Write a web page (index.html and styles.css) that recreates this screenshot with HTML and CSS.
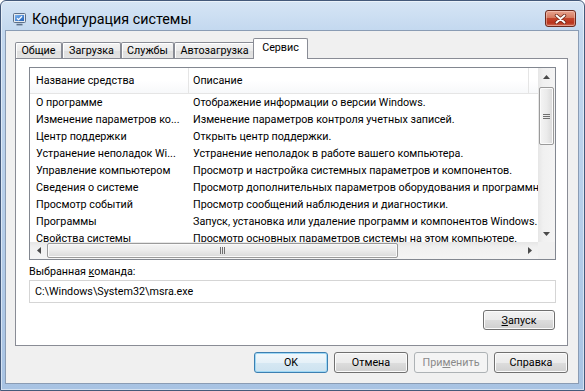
FILE: index.html
```html
<!DOCTYPE html>
<html lang="ru">
<head>
    <meta charset="UTF-8">
    <title>Конфигурация системы</title>
    <link rel="stylesheet" href="styles.css">
</head>
<body>
    <div class="window">
        <div class="titlebar">
            <svg class="app-icon" width="15" height="14" viewBox="0 0 15 14">
                <defs>
                    <linearGradient id="scr" x1="0" y1="0" x2="1" y2="1">
                        <stop offset="0" stop-color="#7fb6f0"/>
                        <stop offset="1" stop-color="#1f5fb8"/>
                    </linearGradient>
                </defs>
                <rect x="1.5" y="1.5" width="12" height="9" rx="1" fill="#e4e9ef" stroke="#5d7089"/>
                <rect x="3" y="3" width="9" height="6" fill="url(#scr)"/>
                <path d="M5 6.2 L6.6 7.7 L10 4.2" fill="none" stroke="#fff" stroke-width="1.3"/>
                <path d="M4.5 12.6 H10.5" stroke="#5d7089" stroke-width="1.6"/>
            </svg>
            <span class="title">Конфигурация системы</span>
            <div class="close-btn">
                <svg width="13" height="10" viewBox="0 0 13 10">
                    <path d="M2.5 1.5 L10.5 8.5 M10.5 1.5 L2.5 8.5" stroke="#6b2416" stroke-width="3.4" stroke-linecap="round"/>
                    <path d="M2.5 1.5 L10.5 8.5 M10.5 1.5 L2.5 8.5" stroke="#fff" stroke-width="1.9" stroke-linecap="round"/>
                </svg>
            </div>
        </div>

        <div class="client">
            <div class="tabs">
                <div class="tab tab-general">Общие</div>
                <div class="tab tab-boot">Загрузка</div>
                <div class="tab tab-services">Службы</div>
                <div class="tab tab-startup">Автозагрузка</div>
                <div class="tab tab-tools active">Сервис</div>
            </div>

            <div class="panel">
                <div class="listview">
                    <div class="list-main">
                        <div class="list-content">
                            <div class="list-header">
                                <div class="hcol hcol-name">Название средства</div>
                                <div class="hcol hcol-desc">Описание</div>
                            </div>
                            <div class="row"><div class="c1">О программе</div><div class="c2">Отображение информации о версии Windows.</div></div>
                            <div class="row"><div class="c1">Изменение параметров ко...</div><div class="c2">Изменение параметров контроля учетных записей.</div></div>
                            <div class="row"><div class="c1">Центр поддержки</div><div class="c2">Открыть центр поддержки.</div></div>
                            <div class="row"><div class="c1">Устранение неполадок Wi...</div><div class="c2">Устранение неполадок в работе вашего компьютера.</div></div>
                            <div class="row"><div class="c1">Управление компьютером</div><div class="c2">Просмотр и настройка системных параметров и компонентов.</div></div>
                            <div class="row"><div class="c1">Сведения о системе</div><div class="c2">Просмотр дополнительных параметров оборудования и программного обеспечения.</div></div>
                            <div class="row"><div class="c1">Просмотр событий</div><div class="c2">Просмотр сообщений наблюдения и диагностики.</div></div>
                            <div class="row"><div class="c1">Программы</div><div class="c2">Запуск, установка или удаление программ и компонентов Windows.</div></div>
                            <div class="row"><div class="c1">Свойства системы</div><div class="c2">Просмотр основных параметров системы на этом компьютере.</div></div>
                        </div>
                        <div class="vscroll">
                            <div class="sb-btn">
                                <svg width="7" height="4" viewBox="0 0 7 4"><path d="M0 4 L3.5 0 L7 4 Z" fill="#4a4a4a"/></svg>
                            </div>
                            <div class="v-track">
                                <div class="v-thumb"><span class="grip-h"></span></div>
                            </div>
                            <div class="sb-btn">
                                <svg width="7" height="4" viewBox="0 0 7 4"><path d="M0 0 L3.5 4 L7 0 Z" fill="#4a4a4a"/></svg>
                            </div>
                        </div>
                    </div>
                    <div class="hscroll-row">
                        <div class="hscroll">
                            <div class="sb-btn">
                                <svg width="4" height="7" viewBox="0 0 4 7"><path d="M4 0 L0 3.5 L4 7 Z" fill="#4a4a4a"/></svg>
                            </div>
                            <div class="h-track">
                                <div class="h-thumb"><span class="grip-v"></span></div>
                            </div>
                            <div class="sb-btn">
                                <svg width="4" height="7" viewBox="0 0 4 7"><path d="M0 0 L4 3.5 L0 7 Z" fill="#4a4a4a"/></svg>
                            </div>
                        </div>
                        <div class="sb-corner"></div>
                    </div>
                </div>

                <div class="cmd-label">Выбранная <u>к</u>оманда:</div>
                <div class="cmd-field">C:\Windows\System32\msra.exe</div>
                <div class="launch-row">
                    <button class="btn btn-launch"><u>З</u>апуск</button>
                </div>
            </div>

            <div class="footer">
                <button class="btn default">OK</button>
                <button class="btn">Отмена</button>
                <button class="btn" disabled>При<u>м</u>енить</button>
                <button class="btn">Справка</button>
            </div>
        </div>
    </div>
</body>
</html>
```

FILE: styles.css
```css
* {
    box-sizing: border-box;
}
body {
    margin: 0;
    background: #fff;
    font-family: Roboto, "Noto Sans", sans-serif;
    font-size: 10.75px;
    color: #000;
}
.window {
    width: 585px;
    height: 391px;
    display: flex;
    flex-direction: column;
    border: 1px solid #44597a;
    border-radius: 6px 6px 0 0;
    background: linear-gradient(180deg, #d6e5f5 0, #c3d8ef 30px, #b5cde9 60%, #a8c3e3 100%);
    box-shadow: inset 0 0 0 1px rgba(255, 255, 255, 0.5);
}

/* title bar */
.titlebar {
    height: 29px;
    flex: none;
    display: flex;
    align-items: center;
    padding: 6px 8px 0 11px;
}
.app-icon {
    flex: none;
    margin-right: 5px;
}
.title {
    flex: 1;
    font-size: 14.3px;
    color: #000;
}
.close-btn {
    width: 31px;
    height: 17px;
    display: flex;
    align-items: center;
    justify-content: center;
    border: 1px solid #6b2a1e;
    border-radius: 3px;
    background: linear-gradient(180deg, #e9a48f 0, #d47a60 45%, #c3442b 50%, #b8341d 80%, #d2715a 100%);
    box-shadow: inset 0 0 0 1px rgba(255, 220, 210, 0.45);
}

/* client area */
.client {
    flex: 1;
    margin: 0 5px 6px 4px;
    border: 1px solid #8a9cb4;
    background: #f0f0f0;
    padding: 7px 10px 0 9px;
    display: flex;
    flex-direction: column;
}
.tabs {
    height: 20px;
    flex: none;
    display: flex;
    align-items: flex-end;
    position: relative;
    z-index: 1;
}
.tab {
    height: 16px;
    line-height: 15px;
    text-align: center;
    border: 1px solid #898c95;
    border-bottom: none;
    border-radius: 2px 2px 0 0;
    background: linear-gradient(180deg, #f4f4f4 0, #ebebeb 50%, #dedede 51%, #e3e3e3 100%);
    box-shadow: inset 1px 1px 0 #fff;
}
.tab-general { width: 47px; }
.tab-boot { width: 59px; }
.tab-services { width: 53px; }
.tab-startup { width: 81px; }
.tab.active {
    width: 55px;
    height: 21px;
    margin-left: -2px;
    margin-bottom: -1px;
    line-height: 18px;
    background: #fff;
    box-shadow: none;
}
.panel {
    flex: 1;
    border: 1px solid #898c95;
    background: #fff;
    padding: 8px 11px 0 13px;
    display: flex;
    flex-direction: column;
}

/* list view */
.listview {
    height: 193px;
    flex: none;
    border: 1px solid #828790;
    display: flex;
    flex-direction: column;
}
.list-main {
    height: 174px;
    display: flex;
}
.list-content {
    flex: 1;
    overflow: hidden;
    white-space: nowrap;
}
.list-header {
    height: 26px;
    display: flex;
    border-bottom: 1px solid #e5e5e5;
    background: linear-gradient(180deg, #fff 0, #fff 50%, #f7f8fa 100%);
}
.hcol {
    line-height: 25px;
    flex: none;
}
.hcol-name {
    width: 159px;
    padding-left: 6px;
    border-right: 1px solid #e5e5e5;
}
.hcol-desc {
    padding-left: 4px;
    width: 340px;
    border-right: 1px solid #e5e5e5;
}
.row {
    height: 17px;
    line-height: 18px;
    display: flex;
}
.c1 {
    width: 158px;
    flex: none;
    padding-left: 6px;
    overflow: hidden;
}
.c2 {
    flex: none;
    padding-left: 5px;
}

/* scroll bars */
.vscroll {
    width: 17px;
    flex: none;
    display: flex;
    flex-direction: column;
    background: linear-gradient(90deg, #e6e6e6 0, #f0f0f0 30%, #f4f4f4 100%);
}
.sb-btn {
    width: 17px;
    height: 17px;
    flex: none;
    display: flex;
    align-items: center;
    justify-content: center;
}
.v-track {
    flex: 1;
    padding: 2px 1px 0 1px;
}
.v-thumb {
    height: 58px;
    border: 1px solid #9a9a9a;
    border-radius: 2px;
    background: linear-gradient(90deg, #f4f4f4 0, #ebebeb 50%, #d9d9d9 100%);
    box-shadow: inset 0 0 0 1px #fafafa;
    display: flex;
    align-items: center;
    justify-content: center;
}
.grip-h {
    width: 7px;
    height: 5px;
    border-top: 1px solid #6f6f6f;
    border-bottom: 1px solid #6f6f6f;
    background: linear-gradient(180deg, transparent 1px, #6f6f6f 1px, #6f6f6f 2px, transparent 2px);
}
.hscroll-row {
    height: 17px;
    display: flex;
}
.hscroll {
    flex: 1;
    display: flex;
    background: linear-gradient(180deg, #e6e6e6 0, #f0f0f0 30%, #f4f4f4 100%);
}
.h-track {
    flex: 1;
    padding: 1px 0;
}
.h-thumb {
    width: 351px;
    height: 100%;
    border: 1px solid #9a9a9a;
    border-radius: 2px;
    background: linear-gradient(180deg, #f4f4f4 0, #ebebeb 50%, #d9d9d9 100%);
    box-shadow: inset 0 0 0 1px #fafafa;
    display: flex;
    align-items: center;
    justify-content: center;
}
.grip-v {
    width: 5px;
    height: 7px;
    border-left: 1px solid #6f6f6f;
    border-right: 1px solid #6f6f6f;
    background: linear-gradient(90deg, transparent 1px, #6f6f6f 1px, #6f6f6f 2px, transparent 2px);
}
.sb-corner {
    width: 17px;
    flex: none;
    background: #f0f0f0;
}

/* command */
.cmd-label {
    margin-top: 4px;
    line-height: 15px;
}
.cmd-field {
    margin-top: 1px;
    height: 23px;
    line-height: 21px;
    border: 1px solid #d5d5d5;
    padding-left: 5px;
    background: #fff;
}
.launch-row {
    display: flex;
    justify-content: flex-end;
    margin-top: 7px;
    padding-right: 1px;
}

/* buttons */
.btn {
    width: 74px;
    height: 21px;
    padding: 0;
    font-family: inherit;
    font-size: 10.75px;
    color: #000;
    border: 1px solid #707070;
    border-radius: 3px;
    background: linear-gradient(180deg, #f2f2f2 0, #ebebeb 50%, #dddddd 51%, #cfcfcf 100%);
    box-shadow: inset 0 0 0 1px #fbfbfb;
}
.btn-launch {
    width: 72px;
    height: 20px;
}
.btn.default {
    border-color: #3c7fb1;
    background: linear-gradient(180deg, #f1f8fc 0, #e6f1f8 50%, #d6e8f3 51%, #cde3f0 100%);
    box-shadow: inset 0 0 0 1px #9fd8f5;
}
.btn:disabled {
    color: #8a8a8a;
    border-color: #adb2b5;
    background: #f4f4f4;
    box-shadow: none;
}
.footer {
    flex: none;
    display: flex;
    justify-content: flex-end;
    gap: 6px;
    padding: 6px 0 10px;
}
```
